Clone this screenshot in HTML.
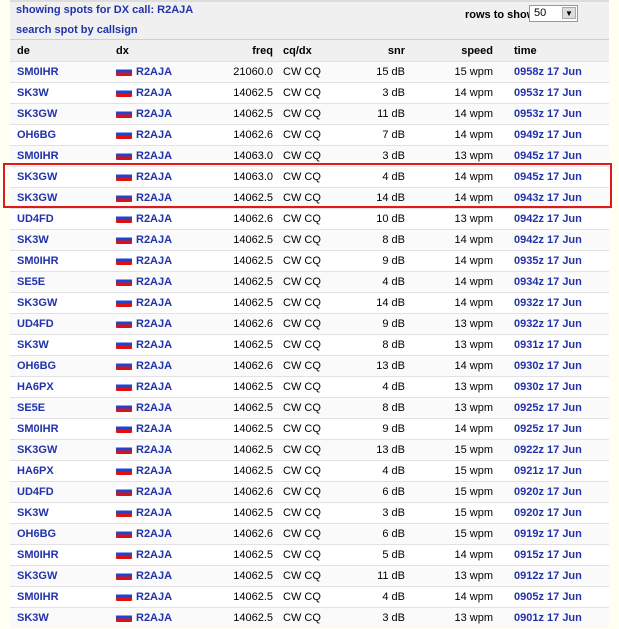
<!DOCTYPE html><html><head><style>
body{margin:0;width:619px;height:629px;background:#fffff2;font-family:"Liberation Sans",Arial,sans-serif;font-size:11px;position:relative;overflow:hidden}
#w{position:absolute;left:10px;top:0;width:599px;background:#fff}
.top{background:#f0f0f0;height:37px;border-top:2px solid #ddd;position:relative}
.top a{position:absolute;left:6px;color:#2233aa;font-size:11px;font-weight:bold}
table{border-collapse:collapse;width:599px;table-layout:fixed}
td,th{height:20px;padding:0;border-top:1px solid #e2e2e2;white-space:nowrap;overflow:hidden}
th{background:#f0f0f0;font-weight:bold;text-align:left;color:#000;height:21px;border-top:1px solid #d0d0d0}
tr.d td{background:#fafafa}
.c{color:#2233aa;font-weight:bold}
.r{text-align:right}
.f{display:inline-block;width:16px;height:10px;vertical-align:middle;margin-right:4px;margin-top:-2px;background:linear-gradient(#fff 0 33%,#2244cc 33% 66%,#dd1111 66%);border-radius:1px}
.rs{position:absolute;left:455px;top:7px;font-weight:bold;white-space:nowrap}
.sel{position:absolute;left:519px;top:3px;width:47px;height:15px;border:1px solid #999;background:#fff;font-size:11px}
.sel span{position:absolute;left:4px;top:1px}
.sel b{position:absolute;right:1px;top:1px;width:14px;height:12px;background:#ddd;border:1px solid #aaa;box-sizing:border-box;font-size:8px;text-align:center;line-height:11px}
.box{position:absolute;left:3px;top:163px;width:605px;height:41px;border:2px solid #e01a1a}
</style></head><body>
<div id="w">
<div class="top"><a style="top:2px">showing spots for DX call: R2AJA</a><a style="top:22px">search spot by callsign</a>
<div class="rs">rows to show:</div><div class="sel"><span>50</span><b>▼</b></div></div>
<table>
<colgroup><col style="width:7px"><col style="width:99px"><col style="width:94px"><col style="width:63px"><col style="width:10px"><col style="width:60px"><col style="width:62px"><col style="width:88px"><col style="width:21px"><col></colgroup>
<tr><th></th><th>de</th><th>dx</th><th style="text-align:right">freq</th><th></th><th>cq/dx</th><th style="text-align:right">snr</th><th style="text-align:right">speed</th><th></th><th>time</th></tr>
<tbody id="b"></tbody></table></div>
<div class="box"></div>
<script>
var d=[["SM0IHR","21060.0",15,15,"0958z"],["SK3W","14062.5",3,14,"0953z"],["SK3GW","14062.5",11,14,"0953z"],["OH6BG","14062.6",7,14,"0949z"],["SM0IHR","14063.0",3,13,"0945z"],["SK3GW","14063.0",4,14,"0945z"],["SK3GW","14062.5",14,14,"0943z"],["UD4FD","14062.6",10,13,"0942z"],["SK3W","14062.5",8,14,"0942z"],["SM0IHR","14062.5",9,14,"0935z"],["SE5E","14062.5",4,14,"0934z"],["SK3GW","14062.5",14,14,"0932z"],["UD4FD","14062.6",9,13,"0932z"],["SK3W","14062.5",8,13,"0931z"],["OH6BG","14062.6",13,14,"0930z"],["HA6PX","14062.5",4,13,"0930z"],["SE5E","14062.5",8,13,"0925z"],["SM0IHR","14062.5",9,14,"0925z"],["SK3GW","14062.5",13,15,"0922z"],["HA6PX","14062.5",4,15,"0921z"],["UD4FD","14062.6",6,15,"0920z"],["SK3W","14062.5",3,15,"0920z"],["OH6BG","14062.6",6,15,"0919z"],["SM0IHR","14062.5",5,14,"0915z"],["SK3GW","14062.5",11,13,"0912z"],["SM0IHR","14062.5",4,14,"0905z"],["SK3W","14062.5",3,13,"0901z"]];
var h="";d.forEach(function(r,i){h+='<tr class="'+(i%2?'':'d')+'"><td></td><td class="c">'+r[0]+'</td><td class="c"><span class="f"></span>R2AJA</td><td class="r">'+r[1]+'</td><td></td><td>CW CQ</td><td class="r">'+r[2]+' dB</td><td class="r">'+r[3]+' wpm</td><td></td><td class="c">'+r[4]+' 17 Jun</td></tr>'});
document.getElementById("b").innerHTML=h;
</script>
</body></html>
